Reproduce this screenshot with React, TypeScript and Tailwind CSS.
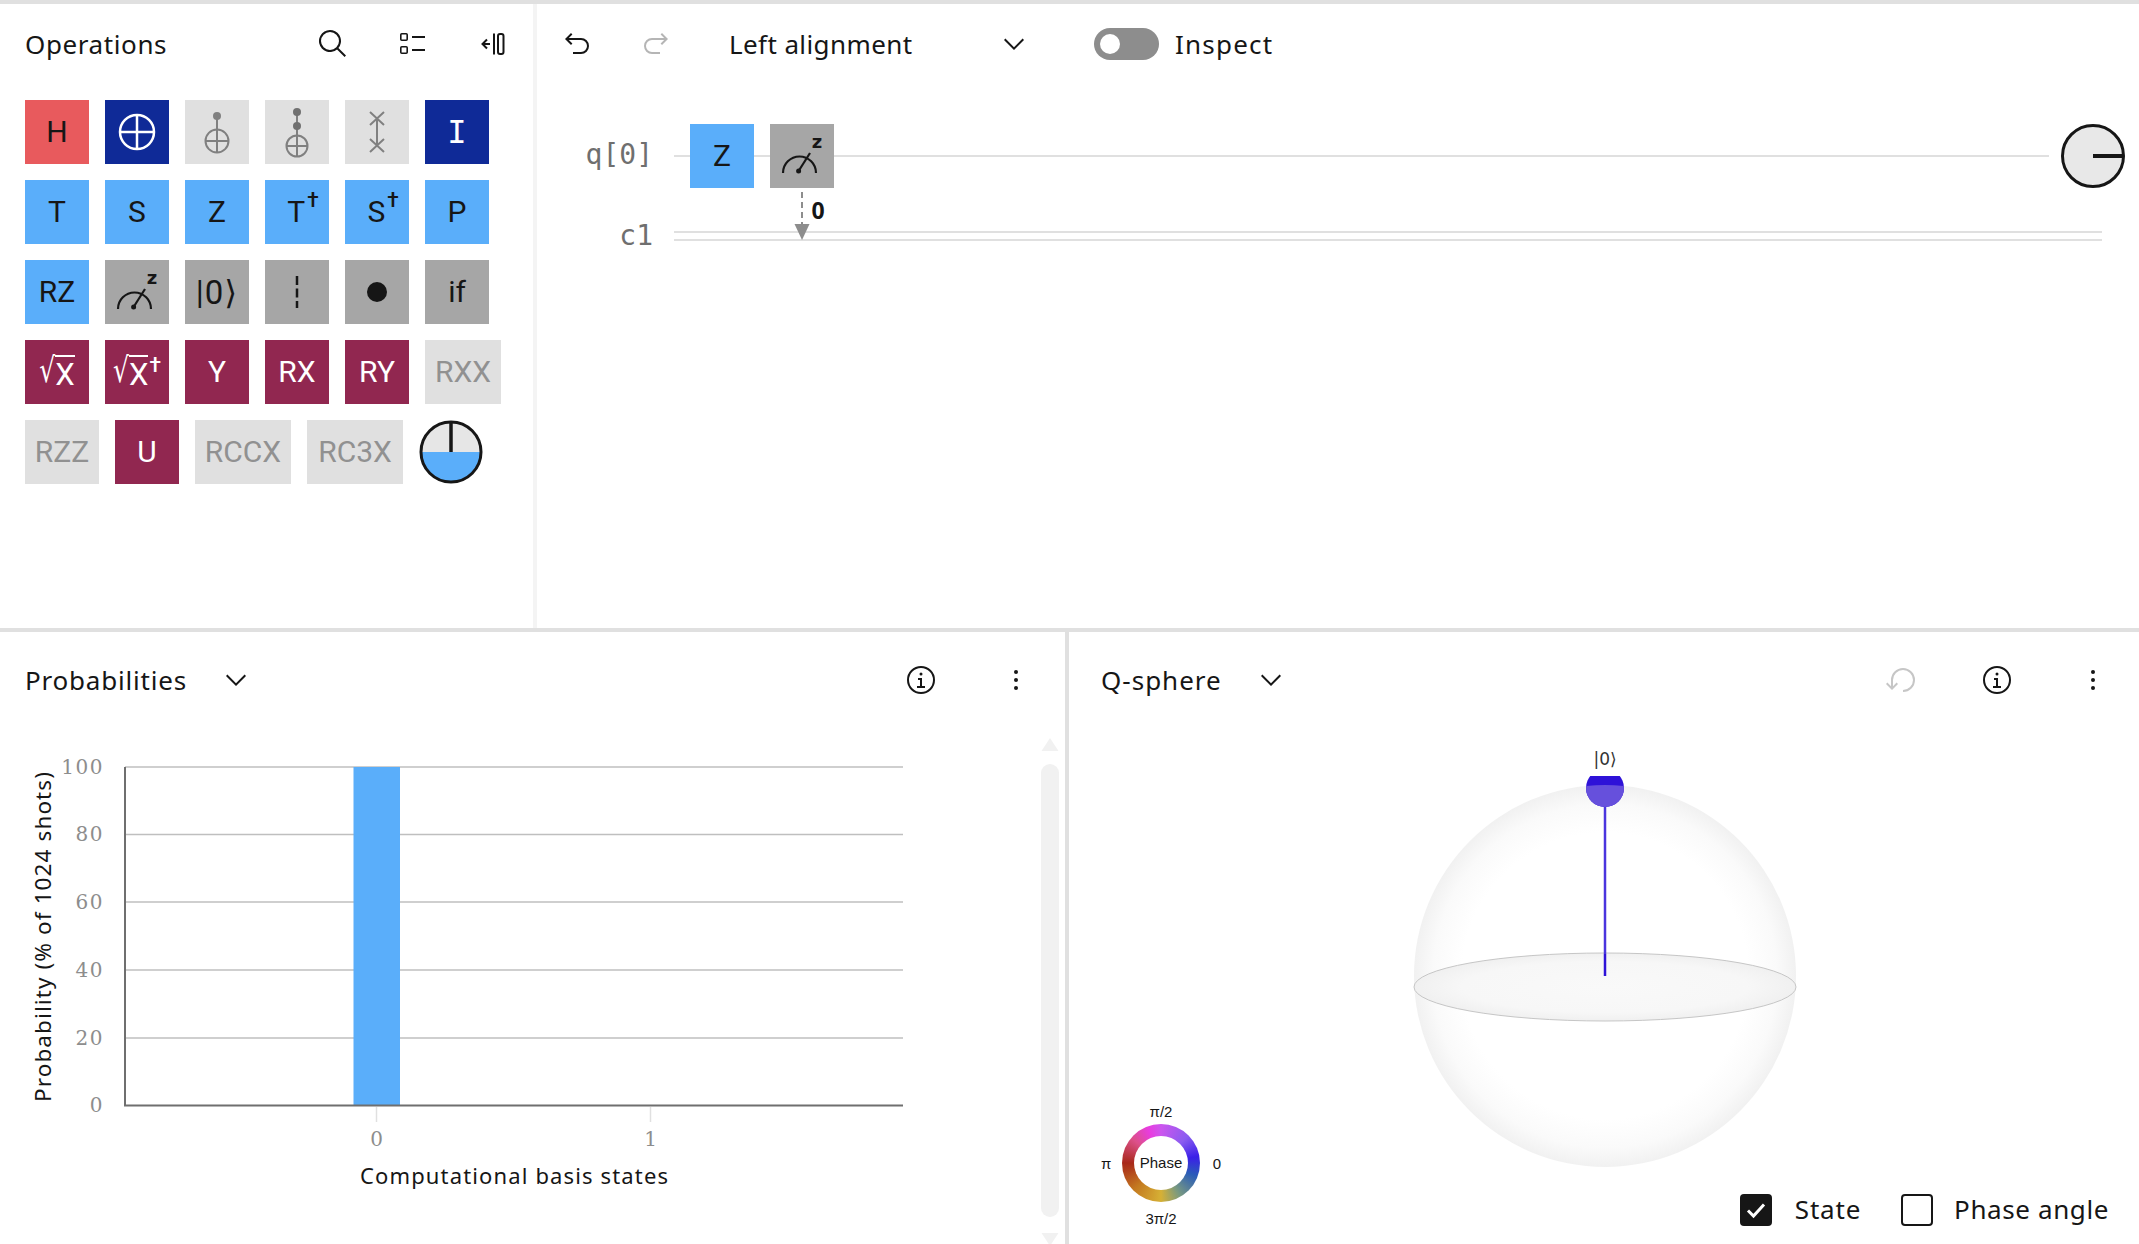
import React from "react";

const INK = "#161616";

function Ico({ d, className = "", fill = INK }: { d: string; className?: string; fill?: string }) {
  return (
    <svg viewBox="0 0 32 32" className={"w-8 h-8 shrink-0 " + className}>
      <path d={d} fill={fill} />
    </svg>
  );
}
const P = {
  search: "M29 27.5859l-7.5521-7.5521a11.0177 11.0177 0 1 0-1.4141 1.4141L27.5859 29ZM4 13a9 9 0 1 1 9 9A9.01 9.01 0 0 1 4 13Z",
  chevron: "M16 22L6 12l1.4-1.4 8.6 8.6 8.6-8.6L26 12z",
  undo: "M20 10H7.8149l3.5874-3.5859L10 5 4 11l6 6 1.4023-1.4146L7.8179 12H20a6 6 0 0 1 0 12H12v2h8a8 8 0 0 0 0-16Z",
  redo: "M12 10h12.1851l-3.5874-3.5859L22 5l6 6-6 6-1.4023-1.4146L24.1821 12H12a6 6 0 0 0 0 12h8v2h-8a8 8 0 0 1 0-16Z",
  reset: "M18,28A12,12,0,1,0,6,16v6.2L2.4,18.6,1,20l6,6,6-6-1.4-1.4L8,22.2V16H8A10,10,0,1,1,18,26Z",
};

function Info() {
  return (
    <svg viewBox="0 0 32 32" className="w-8 h-8 shrink-0">
      <path d="M17 22v-8h-4v2h2v6h-3v2h8v-2h-3z" fill={INK} />
      <circle cx="16" cy="10" r="1.5" fill={INK} />
      <path d="M16 2a14 14 0 1 0 14 14A14 14 0 0 0 16 2zm0 26a12 12 0 1 1 12-12 12 12 0 0 1-12 12z" fill={INK} />
    </svg>
  );
}
function Dots() {
  return (
    <svg viewBox="0 0 32 32" className="w-8 h-8 shrink-0">
      <circle cx="16" cy="8" r="2" fill={INK} />
      <circle cx="16" cy="16" r="2" fill={INK} />
      <circle cx="16" cy="24" r="2" fill={INK} />
    </svg>
  );
}
function ListIco() {
  return (
    <svg viewBox="0 0 32 32" className="w-8 h-8 shrink-0" fill="none" stroke={INK} strokeWidth="1.6">
      <rect x="3.8" y="5.8" width="6.4" height="6.4" rx="1" />
      <rect x="3.8" y="18.8" width="6.4" height="6.4" rx="1" />
      <path d="M15 9h13M15 22h13" strokeWidth="2" />
    </svg>
  );
}
function CollapseIco() {
  return (
    <svg viewBox="0 0 32 32" className="w-8 h-8 shrink-0" fill="none" stroke={INK} strokeWidth="2">
      <path d="M6 16h7M10 11.5 5.5 16l4.5 4.5" />
      <path d="M17 5.500v21" />
      <rect x="21" y="6" width="5.500" height="20" rx="2" />
    </svg>
  );
}

const base = "h-16 flex items-center justify-center shrink-0 font-['Roboto',sans-serif] text-[30px] leading-none";

function Gate({ bg, children, dark = false, w = "w-16" }: { bg: string; children?: React.ReactNode; dark?: boolean; w?: string }) {
  return <div className={`${base} ${w} ${bg} ${dark ? "text-white" : "text-[#161616]"}`}>{children}</div>;
}
const BLUE = "bg-[#5aaefa]";
const GRAY = "bg-[#a6a6a6]";
const MAROON = "bg-[#912750]";
const NAVY = "bg-[#0f2a97]";
const LIGHT = "bg-[#e0e0e0]";

function Off({ w, children }: { w: string; children: React.ReactNode }) {
  return <div className={`${base} ${w} ${LIGHT} text-[#919191]`}>{children}</div>;
}
function Dagger({ children }: { children: React.ReactNode }) {
  return (
    <span className="flex items-start pl-3">
      <span>{children}</span>
      <span className="text-[21px] font-medium -mt-[7px] ml-[2px] leading-none">†</span>
    </span>
  );
}
function Sqrt({ dag = false }: { dag?: boolean }) {
  return (
    <span className="flex items-end leading-none">
      <span className="text-[25px] font-['DejaVu_Sans',sans-serif] origin-bottom scale-y-[1.38] mb-[2px]">√</span>
      <span className="border-t-2 border-white pt-[2px] text-[31px] leading-none">X</span>
      {dag && <span className="text-[21px] font-medium ml-[1px] self-start">†</span>}
    </span>
  );
}
function Meter() {
  return (
    <svg viewBox="0 0 64 64" className="w-16 h-16">
      <path d="M13 49a16.500 16.500 0 0 1 33 0" fill="none" stroke={INK} strokeWidth="2.200" />
      <path d="M28.600 47 40 29" fill="none" stroke={INK} strokeWidth="2.200" />
      <circle cx="28.600" cy="47" r="2.500" fill={INK} />
      <text x="47" y="24" textAnchor="middle" fontFamily="'DejaVu Sans',sans-serif" fontWeight="700" fontSize="18" fill={INK}>z</text>
    </svg>
  );
}
function Plus({ cy, r, color, sw }: { cy: number; r: number; color: string; sw: number }) {
  return (
    <g fill="none" stroke={color} strokeWidth={sw}>
      <circle cx="32" cy={cy} r={r} />
      <path d={`M${32 - r} ${cy}H${32 + r}M32 ${cy - r}V${cy + r}`} />
    </g>
  );
}
function Svg64({ children }: { children: React.ReactNode }) {
  return <svg viewBox="0 0 64 64" className="w-16 h-16">{children}</svg>;
}

function Palette() {
  const row = "flex gap-4";
  return (
    <div className="flex flex-col gap-4 mt-4 pl-[25px]">
      <div className={row}>
        <Gate bg="bg-[#e85a5d]">H</Gate>
        <Gate bg={NAVY}><Svg64><Plus cy={32} r={17} color="#ffffff" sw={2.500} /></Svg64></Gate>
        <Gate bg={LIGHT}>
          <Svg64>
            <path d="M32 16V41" stroke="#808080" strokeWidth="2" />
            <circle cx="32" cy="16" r="4" fill="#808080" />
            <Plus cy={41} r={11.500} color="#808080" sw={2} />
          </Svg64>
        </Gate>
        <Gate bg={LIGHT}>
          <Svg64>
            <path d="M32 12V46" stroke="#808080" strokeWidth="2" />
            <circle cx="32" cy="12" r="4" fill="#707070" />
            <circle cx="32" cy="26" r="4" fill="#707070" />
            <Plus cy={46} r={10.500} color="#808080" sw={2} />
          </Svg64>
        </Gate>
        <Gate bg={LIGHT}>
          <Svg64>
            <path d="M32 18V46M25 12l14 13M39 12 25 25M25 39l14 13M39 39 25 52" stroke="#808080" strokeWidth="2" fill="none" />
          </Svg64>
        </Gate>
        <Gate bg={NAVY} dark><span className="font-['DejaVu_Sans_Mono',monospace] text-[32px]">I</span></Gate>
      </div>
      <div className={row}>
        <Gate bg={BLUE}>T</Gate>
        <Gate bg={BLUE}>S</Gate>
        <Gate bg={BLUE}>Z</Gate>
        <Gate bg={BLUE}><Dagger>T</Dagger></Gate>
        <Gate bg={BLUE}><Dagger>S</Dagger></Gate>
        <Gate bg={BLUE}>P</Gate>
      </div>
      <div className={row}>
        <Gate bg={BLUE}>RZ</Gate>
        <Gate bg={GRAY}><Meter /></Gate>
        <Gate bg={GRAY}><span className="font-['Roboto','DejaVu_Sans',sans-serif] text-[33px] tracking-[1px]">|0⟩</span></Gate>
        <Gate bg={GRAY}>
          <Svg64><path d="M32 16V48" stroke={INK} strokeWidth="2.500" strokeDasharray="9 3.500" /></Svg64>
        </Gate>
        <Gate bg={GRAY}><Svg64><circle cx="32" cy="32" r="10" fill={INK} /></Svg64></Gate>
        <Gate bg={GRAY}>if</Gate>
      </div>
      <div className={row}>
        <Gate bg={MAROON} dark><Sqrt /></Gate>
        <Gate bg={MAROON} dark><Sqrt dag /></Gate>
        <Gate bg={MAROON} dark>Y</Gate>
        <Gate bg={MAROON} dark>RX</Gate>
        <Gate bg={MAROON} dark>RY</Gate>
        <Off w="w-[76px]">RXX</Off>
      </div>
      <div className={row}>
        <Off w="w-[74px]">RZZ</Off>
        <Gate bg={MAROON} dark>U</Gate>
        <Off w="w-[96px]">RCCX</Off>
        <Off w="w-[96px]">RC3X</Off>
        <svg viewBox="0 0 64 64" className="w-16 h-16 shrink-0">
          <path d="M2 32a30 30 0 0 1 60 0z" fill="#e6e6e6" />
          <path d="M2 32a30 30 0 0 0 60 0z" fill="#5aaefa" />
          <circle cx="32" cy="32" r="30" fill="none" stroke={INK} strokeWidth="3" />
          <path d="M32 2V32" stroke={INK} strokeWidth="3.500" />
        </svg>
      </div>
    </div>
  );
}

function Circuit() {
  return (
    <div className="relative mt-10">
      <div className="relative flex items-center h-16">
        <div className="absolute left-[137px] right-[90px] top-[31px] h-[2px] bg-[#e0e0e0]" />
        <div className="w-[116px] -mt-[2px] text-right font-['DejaVu_Sans_Mono',monospace] text-[28px] leading-none text-[#6f6f6f]">q[0]</div>
        <div className="relative flex gap-4 ml-[37px]">
          <Gate bg={BLUE}>Z</Gate>
          <Gate bg={GRAY}><Meter /></Gate>
        </div>
        <svg viewBox="0 0 64 64" className="relative w-16 h-16 ml-auto mr-[14px]">
          <circle cx="32" cy="32" r="30.500" fill="#e8e8e8" stroke={INK} strokeWidth="3" />
          <path d="M32 32H62" stroke={INK} strokeWidth="4" />
        </svg>
      </div>
      <div className="flex items-center h-[10px] mt-[43px]">
        <div className="w-[116px] text-right font-['DejaVu_Sans_Mono',monospace] text-[28px] leading-none text-[#6f6f6f]">c1</div>
        <div className="flex-1 flex flex-col gap-[6px] ml-[21px] mr-[37px]">
          <div className="h-[2px] bg-[#e0e0e0]" />
          <div className="h-[2px] bg-[#e0e0e0]" />
        </div>
      </div>
      <svg viewBox="0 0 50 56" className="absolute left-[257px] top-[64px] w-[50px] h-[56px]">
        <path d="M8 4V38" stroke="#8d8d8d" strokeWidth="2" strokeDasharray="6 4" />
        <path d="M0.500 36H15.500L8 52Z" fill="#8d8d8d" />
        <text x="24" y="31" textAnchor="middle" fontFamily="'Noto Sans',sans-serif" fontWeight="700" fontSize="23" fill={INK}>0</text>
      </svg>
    </div>
  );
}

function Chart() {
  const ys = [767, 834.500, 902, 970, 1038, 1105];
  const labels = ["100", "80", "60", "40", "20", "0"];
  return (
    <svg viewBox="0 728 1041 516" className="w-[1041px] h-[516px] shrink-0">
      {ys.slice(0, 5).map((y) => (
        <line key={y} x1="125" x2="903" y1={y} y2={y} stroke="#bfbfbf" strokeWidth="1.500" />
      ))}
      <line x1="125" x2="125" y1="767" y2="1106" stroke="#6f6f6f" strokeWidth="2" />
      <rect x="353.500" y="767" width="46.500" height="338" fill="#5aaefa" />
      <line x1="124" x2="903" y1="1105.500" y2="1105.500" stroke="#6f6f6f" strokeWidth="2" />
      <line x1="376.500" x2="376.500" y1="1107" y2="1122" stroke="#e0e0e0" strokeWidth="1.500" />
      <line x1="650.500" x2="650.500" y1="1107" y2="1122" stroke="#e0e0e0" strokeWidth="1.500" />
      {labels.map((t, i) => (
        <text key={t} x="104" y={ys[i] + 1} textAnchor="end" dominantBaseline="middle" fontFamily="'DejaVu Serif',serif" fontSize="20" letterSpacing="1.500" fill="#8d8d8d">{t}</text>
      ))}
      <text x="376.500" y="1146" textAnchor="middle" fontFamily="'DejaVu Serif',serif" fontSize="20" fill="#8d8d8d">0</text>
      <text x="650.500" y="1146" textAnchor="middle" fontFamily="'DejaVu Serif',serif" fontSize="20" fill="#8d8d8d">1</text>
      <text x="514" y="1184" textAnchor="middle" fontFamily="'Noto Sans',sans-serif" fontSize="22" textLength="308" fill={INK}>Computational basis states</text>
      <text transform="translate(51 937) rotate(-90)" textAnchor="middle" fontFamily="'Noto Sans',sans-serif" fontSize="22.500" textLength="330" fill={INK}>Probability (% of 1024 shots)</text>
    </svg>
  );
}

function Scrollbar() {
  return (
    <div className="w-[18px] ml-0 flex flex-col items-stretch overflow-hidden">
      <svg viewBox="0 0 18 14" className="w-[18px] h-[14px] mt-[9px] shrink-0"><path d="M9 1 17.500 14H.5Z" fill="#f1f1f1" /></svg>
      <div className="h-[453px] mt-[13px] shrink-0 rounded-full bg-[#f1f1f1]" />
      <svg viewBox="0 0 18 14" className="w-[18px] h-[14px] mt-[16px] shrink-0"><path d="M.5 0H17.500L9 13Z" fill="#f1f1f1" /></svg>
    </div>
  );
}

function Sphere() {
  return (
    <svg viewBox="1069 728 1070 516" className="w-[1070px] h-[516px] absolute left-0 top-0">
      <defs>
        <radialGradient id="sph" cx="50%" cy="50%" r="50%">
          <stop offset="0%" stopColor="#ffffff" />
          <stop offset="75%" stopColor="#ffffff" />
          <stop offset="90%" stopColor="#fafafa" />
          <stop offset="100%" stopColor="#f1f1f1" />
        </radialGradient>
        <radialGradient id="eq" cx="50%" cy="50%" r="50%">
          <stop offset="0%" stopColor="#f9f9f9" />
          <stop offset="75%" stopColor="#f7f7f7" />
          <stop offset="100%" stopColor="#f0f0f0" />
        </radialGradient>
        <clipPath id="top"><rect x="1560" y="776" width="90" height="60" /></clipPath>
        <clipPath id="ins"><circle cx="1605" cy="976" r="191" /></clipPath>
      </defs>
      <circle cx="1605" cy="976" r="191" fill="url(#sph)" />
      <ellipse cx="1605" cy="987" rx="191" ry="34" fill="url(#eq)" stroke="#c6c6c6" strokeWidth="1" />
      <line x1="1605" x2="1605" y1="800" y2="954" stroke="#4a35de" strokeWidth="2.500" />
      <line x1="1605" x2="1605" y1="954" y2="976" stroke="#2e12d8" strokeWidth="2.500" />
      <g clipPath="url(#top)">
        <circle cx="1605" cy="788" r="19" fill="#2e12d8" />
        <g clipPath="url(#ins)"><circle cx="1605" cy="788" r="19" fill="#6650dc" /></g>
      </g>
      <text x="1605" y="765" textAnchor="middle" fontFamily="'DejaVu Sans',sans-serif" fontSize="17" fill="#333333">|0⟩</text>
    </svg>
  );
}

function PhaseLegend() {
  const t = "font-['Liberation_Sans',sans-serif] text-[15px] leading-none text-[#161616]";
  return (
    <div className="absolute left-[27px] bottom-[18px] w-[130px] flex flex-col items-center">
      <div className={t}>π/2</div>
      <div className="flex items-center mt-[5px] mb-[9px]">
        <div className={t + " w-[26px] pl-[5px]"}>π</div>
        <div className="w-[78px] h-[78px] rounded-full flex items-center justify-center bg-[conic-gradient(#cc55ee_0deg,#8a5cf0_45deg,#3a1fe8_80deg,#2a5cb8_110deg,#7a9a80_150deg,#d6b035_180deg,#c47a20_225deg,#a8281a_270deg,#dc5088_310deg,#e83ce0_340deg,#cc55ee_360deg)]">
          <div className="w-[54px] h-[54px] rounded-full bg-white flex items-center justify-center font-['Liberation_Sans',sans-serif] text-[15px] text-[#161616]">Phase</div>
        </div>
        <div className={t + " w-[26px] pr-[5px] text-right"}>0</div>
      </div>
      <div className={t}>3π/2</div>
    </div>
  );
}

const ui = "font-['Noto_Sans',sans-serif] text-[#161616] leading-none text-[26px]";

export default function App() {
  return (
    <div className="w-[2139px] h-[1244px] overflow-hidden bg-white border-t-4 border-[#e0e0e0] flex flex-col">
      <div className="flex h-[628px] shrink-0 border-b-4 border-[#e0e0e0]">
        <div className="w-[537px] shrink-0 border-r-4 border-[#f4f4f4]">
          <div className="h-20 flex items-center pl-[25px] pr-6">
            <span className={ui + " tracking-[0.6px]"}>Operations</span>
            <div className="ml-auto flex gap-12">
              <Ico d={P.search} />
              <ListIco />
              <CollapseIco />
            </div>
          </div>
          <Palette />
        </div>
        <div className="flex-1 min-w-0">
          <div className="h-20 flex items-center pl-6">
            <Ico d={P.undo} />
            <Ico d={P.redo} fill="#b5b5b5" className="ml-[47px]" />
            <div className="w-[301px] ml-[57px] flex items-center justify-between">
              <span className={ui + " tracking-[0.4px]"}>Left alignment</span>
              <Ico d={P.chevron} />
            </div>
            <div className="w-[65px] h-8 ml-16 rounded-full bg-[#8d8d8d] flex items-center">
              <div className="w-5 h-5 ml-[6px] rounded-full bg-white" />
            </div>
            <span className={ui + " tracking-[1.2px] ml-4"}>Inspect</span>
          </div>
          <Circuit />
        </div>
      </div>
      <div className="flex flex-1 min-h-0">
        <div className="w-[1069px] shrink-0 border-r-4 border-[#e0e0e0] flex flex-col">
          <div className="h-24 shrink-0 flex items-center pl-[25px] pr-[33px]">
            <span className={ui + " tracking-[0.8px]"}>Probabilities</span>
            <Ico d={P.chevron} className="ml-[33px]" />
            <div className="ml-auto flex gap-[63px]">
              <Info />
              <Dots />
            </div>
          </div>
          <div className="flex flex-1 min-h-0">
            <Chart />
            <Scrollbar />
          </div>
        </div>
        <div className="flex-1 min-w-0 flex flex-col">
          <div className="h-24 shrink-0 flex items-center pl-8 pr-[30px]">
            <span className={ui + " tracking-[1px]"}>Q-sphere</span>
            <Ico d={P.chevron} className="ml-[33px]" />
            <div className="ml-auto flex gap-[64px]">
              <Ico d={P.reset} fill="#c6c6c6" />
              <Info />
              <Dots />
            </div>
          </div>
          <div className="relative flex-1 min-h-0">
            <Sphere />
            <PhaseLegend />
            <div className="absolute right-[30px] bottom-[18px] flex items-center">
              <div className="w-8 h-8 rounded-[4px] bg-[#161616] flex items-center justify-center">
                <svg viewBox="0 0 32 32" className="w-8 h-8"><path d="M8 16.500 13.500 22 24 10.500" fill="none" stroke="#ffffff" strokeWidth="3" /></svg>
              </div>
              <span className={ui + " tracking-[0.8px] ml-[23px] -mt-[3px]"}>State</span>
              <div className="w-8 h-8 ml-10 rounded-[4px] border-[2.5px] border-[#161616]" />
              <span className={ui + " tracking-[0.6px] ml-[21px] -mt-[3px]"}>Phase angle</span>
            </div>
          </div>
        </div>
      </div>
    </div>
  );
}
